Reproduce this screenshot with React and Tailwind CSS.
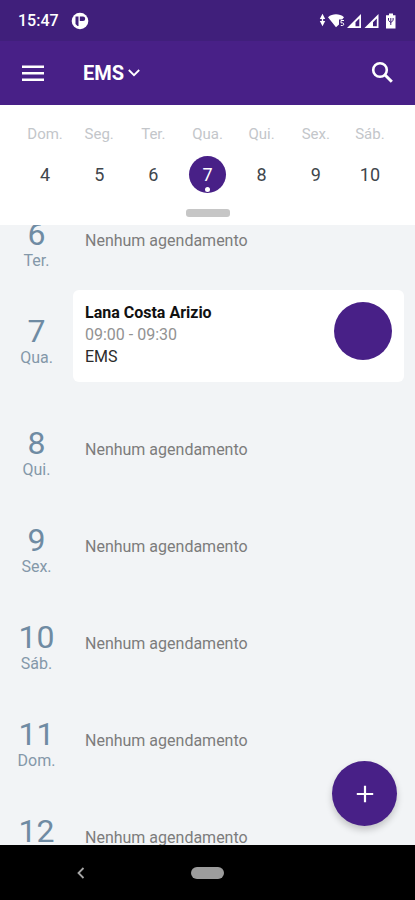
import React, { useState } from "react";

const week = [
  { label: "Dom.", day: 4 },
  { label: "Seg.", day: 5 },
  { label: "Ter.", day: 6 },
  { label: "Qua.", day: 7, hasEvent: true },
  { label: "Qui.", day: 8 },
  { label: "Sex.", day: 9 },
  { label: "Sáb.", day: 10 },
];

const agenda = [
  { day: 6, label: "Ter." },
  {
    day: 7,
    label: "Qua.",
    event: { name: "Lana Costa Arizio", time: "09:00 - 09:30", place: "EMS" },
  },
  { day: 8, label: "Qui." },
  { day: 9, label: "Sex." },
  { day: 10, label: "Sáb." },
  { day: 11, label: "Dom." },
  { day: 12, label: "Seg." },
];

const StatusBar = () => (
  <div className="flex h-[41px] shrink-0 items-center bg-[#401f7b] px-[18px] text-white">
    <span className="text-base font-medium">15:47</span>
    <svg className="ml-3 size-[18px]" viewBox="0 0 18 18">
      <circle cx="9" cy="9" r="8.3" fill="#fff" />
      <path d="M4.500 4.500h3v9.500h-1l-2-2z" fill="#401f7b" />
      <path d="M8.800 4.500h3.200a2.200 2.200 0 0 1 0 4.400H8.800z" fill="#401f7b" />
    </svg>
    <svg className="ml-auto h-4 w-[78px]" viewBox="0 0 78 16" fill="#fff">
      <path d="M3.500.8 6.200 6H.8zM3.500 13.200.8 8h5.400zM2.800 6h1.400v2H2.800z" />
      <path d="M9 4.200C13.500.4 20.500.4 25 4.200L23.200 6.500H20v5L17 14.300z" />
      <path
        d="M25 7.500h-3v2.400h1.600c1.500 0 1.500 2.600 0 2.600h-1.800"
        fill="none"
        stroke="#fff"
        strokeWidth="1"
      />
      <path d="M42 1v14H28z" />
      <path d="M40.300 5.500v7.800H36.500V9.200z" fill="#401f7b" />
      <path d="M59.500 1v14h-14z" />
      <path d="M57.800 5.500v7.800H54V9.200z" fill="#401f7b" />
      <path d="M70 .5h4v1.700h2.500V15.500h-9.500V2.200H70z" />
      <path
        d="M69.500 5v2.500L71.800 9.500l2.300-2V5M71.800 5v7"
        fill="none"
        stroke="#401f7b"
        strokeWidth="1"
      />
    </svg>
  </div>
);

const Header = () => (
  <header className="flex h-16 shrink-0 items-center bg-[#482087] px-5 text-white">
    <button aria-label="Menu">
      <svg className="size-[26px]" viewBox="0 0 26 26" fill="#fff">
        <path d="M2 5.500h22v2.400H2zM2 12h22v2.400H2zM2 18.500h22v2.400H2z" />
      </svg>
    </button>
    <button className="ml-[37px] flex items-center gap-1 text-xl font-bold">
      EMS
      <svg
        className="size-3"
        viewBox="0 0 12 12"
        fill="none"
        stroke="#fff"
        strokeWidth="1.8"
      >
        <path d="m.8 3 5.200 5.200L11.200 3" />
      </svg>
    </button>
    <button className="ml-auto" aria-label="Buscar">
      <svg
        className="size-[26px]"
        viewBox="0 0 26 26"
        fill="none"
        stroke="#fff"
      >
        <circle cx="11" cy="10" r="6.800" strokeWidth="2.600" />
        <path d="m15.800 14.800 7 7" strokeWidth="3" />
      </svg>
    </button>
  </header>
);

const WeekStrip = () => {
  const [selected, setSelected] = useState(7);

  return (
    <div className="flex h-[120px] shrink-0 flex-col items-center bg-white px-[18px] pt-[19px]">
      <div className="grid w-full grid-cols-7">
        {week.map((item) => (
          <button
            key={item.day}
            className="flex flex-col items-center gap-3"
            onClick={() => setSelected(item.day)}
          >
            <span className="text-[15px] leading-5 text-[#c3c6ca]">
              {item.label}
            </span>
            <span
              className={`relative flex size-[37px] items-center justify-center rounded-full text-lg ${
                selected === item.day
                  ? "bg-[#482087] text-white"
                  : "text-[#3f464c]"
              }`}
            >
              {item.day}
              {item.hasEvent && (
                <i className="absolute bottom-px size-[5px] rounded-full bg-white" />
              )}
            </span>
          </button>
        ))}
      </div>
      <div className="mt-4 h-2 w-11 rounded-[3px] bg-[#c6c6c6]" />
    </div>
  );
};

const AgendaRow = ({ day, label, event }) => (
  <li className="flex min-h-[97px] pb-4 pr-[11px]">
    <div className="flex w-[73px] flex-col items-center pt-6">
      <span className="text-[32px] leading-[34px] text-[#6f8ba3]">{day}</span>
      <span className="text-base leading-5 text-[#8498a9]">{label}</span>
    </div>
    {event ? (
      <div className="mb-1 flex h-[92px] flex-1 justify-between rounded-md bg-white p-3">
        <div className="text-base leading-[22px]">
          <p className="font-bold text-[#111]">{event.name}</p>
          <p className="text-[#929292]">{event.time}</p>
          <p className="text-[#2b2b2b]">{event.place}</p>
        </div>
        <div className="size-[58px] rounded-full bg-[#482087]" />
      </div>
    ) : (
      <p className="pl-3 pt-9 text-base text-[#7c7c7c]">Nenhum agendamento</p>
    )}
  </li>
);

const App = () => {
  return (
    <div className="flex h-screen flex-col overflow-hidden font-['Roboto',sans-serif]">
      <StatusBar />
      <Header />
      <WeekStrip />
      <main className="relative min-h-0 flex-1 overflow-hidden bg-[#f2f4f6]">
        <ul className="-mt-8">
          {agenda.map((item) => (
            <AgendaRow key={item.day} {...item} />
          ))}
        </ul>
        <button
          className="absolute bottom-[19px] right-[18px] flex size-[65px] items-center justify-center rounded-full bg-[#482087] shadow-[0_4px_7px_rgba(0,0,0,0.2)]"
          aria-label="Novo agendamento"
        >
          <svg className="size-[18px]" viewBox="0 0 18 18" fill="#fff">
            <path d="M7.900.8h2.200v7.100h7.100v2.200h-7.100v7.100H7.900v-7.100H.8V7.900h7.100z" />
          </svg>
        </button>
      </main>
      <nav className="grid h-[55px] shrink-0 grid-cols-5 items-center justify-items-center bg-black">
        <button className="col-span-2 pr-1" aria-label="Voltar">
          <svg
            className="size-3"
            viewBox="0 0 12 12"
            fill="none"
            stroke="#a6a6a6"
            strokeWidth="1.8"
          >
            <path d="M8.500 1 3.500 6l5 5" />
          </svg>
        </button>
        <button
          className="h-3 w-[33px] rounded-full bg-[#9c9c9c]"
          aria-label="Início"
        />
      </nav>
    </div>
  );
};

export default App;
